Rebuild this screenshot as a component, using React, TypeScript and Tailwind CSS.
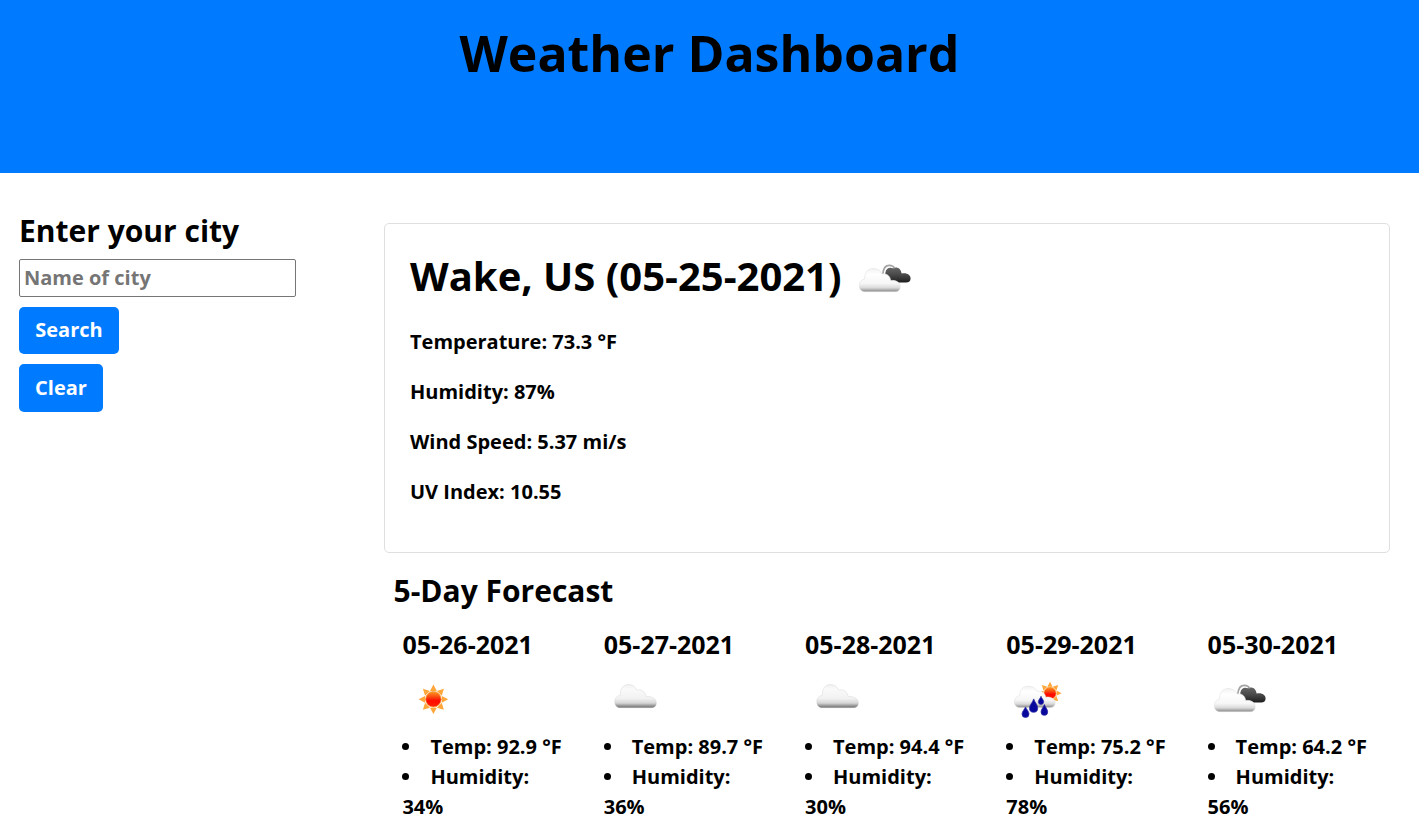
import React from "react";

type Kind = "sun" | "cloud" | "broken" | "rain";

function Defs() {
  return (
    <svg className="absolute h-0 w-0" aria-hidden="true">
      <defs>
        <linearGradient id="white-cloud" x1="0" y1="0" x2="0" y2="1">
          <stop offset="0" stopColor="#f0f0f0" />
          <stop offset="0.2" stopColor="#fafafa" />
          <stop offset="0.6" stopColor="#f2f2f2" />
          <stop offset="0.8" stopColor="#d6d6d6" />
          <stop offset="0.9" stopColor="#a0a0a0" />
          <stop offset="1" stopColor="#707070" />
        </linearGradient>
        <linearGradient id="bright-cloud" x1="0" y1="0" x2="0" y2="1">
          <stop offset="0" stopColor="#f2f2f2" />
          <stop offset="0.25" stopColor="#ffffff" />
          <stop offset="0.65" stopColor="#f6f6f6" />
          <stop offset="0.83" stopColor="#dadada" />
          <stop offset="1" stopColor="#888888" />
        </linearGradient>
        <linearGradient id="dark-cloud" x1="0" y1="0" x2="0" y2="1">
          <stop offset="0" stopColor="#666666" />
          <stop offset="0.5" stopColor="#484848" />
          <stop offset="0.8" stopColor="#303030" />
          <stop offset="1" stopColor="#1c1c1c" />
        </linearGradient>
        <linearGradient id="sun-disc" x1="0" y1="0" x2="0" y2="1">
          <stop offset="0" stopColor="#ff9a20" />
          <stop offset="0.35" stopColor="#f84a10" />
          <stop offset="0.6" stopColor="#ff0800" />
          <stop offset="1" stopColor="#ff2200" />
        </linearGradient>
      </defs>
    </svg>
  );
}

function Sun() {
  return (
    <g>
      {[0, 45, 90, 135, 180, 225, 270, 315].map((a) => (
        <path key={a} d="M-3.4 -8.4 L0 -14.8 L3.4 -8.4Z" fill="#ffa63a" transform={`rotate(${a})`} />
      ))}
      <circle r="7.8" fill="url(#sun-disc)" stroke="#f5a040" strokeWidth="0.8" />
    </g>
  );
}

/* Each icon is drawn in a 70x55 box. */
function WeatherIcon({ kind }: { kind: Kind }) {
  return (
    <svg width="70" height="55" viewBox="0 0 70 55" className="block shrink-0">
      {kind === "sun" && (
        <g transform="translate(33.4 29.3)">
          <Sun />
        </g>
      )}
      {kind === "cloud" && (
        <path
          transform="translate(-1.1 0.2)"
          d="M19 37.5 C16.5 37 14.8 34.5 14.8 31.5 C14.8 28 17 25.5 20.5 25 C20 18.5 23.5 14.3 28.5 14.3 C32.5 14.3 35.5 16.5 36.8 20 C41.5 18.6 45.5 21.5 46.3 26.5 C51.5 25.5 56.5 28.5 56.5 32.5 C56.5 35.5 55 37.5 51 37.5Z"
          fill="url(#white-cloud)"
          stroke="#bbbbbb"
          strokeOpacity="0.5"
          strokeWidth="0.5"
        />
      )}
      {kind === "broken" && (
        <g>
          <path
            d="M42 31 C36.5 30.5 34.8 27 35.4 22.5 C36 18.4 39.5 16.6 43 18.3 C46.5 16.2 51 18 51.6 23.6 C56.5 22.4 60.6 24.8 60.6 28.5 C60.6 31 59 32.4 56 32.4 L44 32.4Z"
            fill="url(#dark-cloud)"
          />
          <path d="M32.9 24 C33.3 18 35.5 15.3 39.3 15.3 C42 15.3 43.8 16.5 44.6 18.3" fill="none" stroke="#a4a4a4" strokeWidth="1.7" />
          <path
            d="M14 41.7 C11 41.2 9.3 38.7 9.3 35.7 C9.3 32 11.3 29.8 14.6 29 C14.4 22.5 18 18.6 23 18.6 C27.5 18.6 30.7 20.6 32 24 C36.5 23 40.2 26 40.8 30.5 C46 29.7 50.2 32.5 50.2 36.7 C50.2 39.7 48.3 41.7 45 41.7Z"
            fill="url(#bright-cloud)"
            stroke="#dddddd"
            strokeWidth="0.5"
          />
        </g>
      )}
      {kind === "rain" && (
        <g transform="translate(1 -0.4)">
          <g transform="translate(45 23.6) scale(.78)">
            <Sun />
          </g>
          <path
            d="M14 38 C11 37.5 9.3 35 9.3 32.3 C9.3 29 11.3 26.8 14.6 26 C14.4 20.5 18 16.6 23 16.6 C27.5 16.6 30.7 18.4 32 21.8 C36.5 20.8 40.2 23.3 40.8 27.6 C46 26.8 50.2 29.5 50.2 33.5 C50.2 36 48.3 38 45 38Z"
            fill="url(#bright-cloud)"
            stroke="#dddddd"
            strokeWidth="0.5"
          />
          <g fill="#08089c" stroke="#26269f" strokeWidth="0.7">
            <path d="M20.5 37.3 C19.5 40 17 41.6 17 44.4 A3.5 3.5 0 0 0 24 44.4 C24 41.6 21.5 40 20.5 37.3Z" />
            <path d="M28.7 29.3 C27.5 33 24.5 35.5 24.5 38.6 A4.1 4.1 0 0 0 32.7 38.6 C32.7 35.5 30 33 28.7 29.3Z" />
            <path d="M36 26.7 C35.4 28.8 33.4 30 33.4 32.2 A2.6 2.6 0 0 0 38.6 32.2 C38.6 30 36.6 28.8 36 26.7Z" />
            <path d="M39.4 35 C38.4 38 36 39.6 36 42.4 A3.3 3.3 0 0 0 42.7 42.4 C42.7 39.6 40.4 38 39.4 35Z" />
          </g>
        </g>
      )}
    </svg>
  );
}

const days: { date: string; kind: Kind; temp: string; humidity: string }[] = [
  { date: "05-26-2021", kind: "sun", temp: "92.9", humidity: "34" },
  { date: "05-27-2021", kind: "cloud", temp: "89.7", humidity: "36" },
  { date: "05-28-2021", kind: "cloud", temp: "94.4", humidity: "30" },
  { date: "05-29-2021", kind: "rain", temp: "75.2", humidity: "78" },
  { date: "05-30-2021", kind: "broken", temp: "64.2", humidity: "56" },
];

export default function App() {
  return (
    <div className="h-[831px] overflow-hidden bg-white font-['Open_Sans',sans-serif] text-[20px] leading-[30px] font-bold text-black">
      <Defs />
      <header className="h-[173px] bg-[#007bff] pt-[23px] text-center">
        <h1 className="text-[50px] leading-[60px]">Weather Dashboard</h1>
      </header>
      <div className="flex">
        <aside className="flex w-[384px] shrink-0 flex-col items-start pt-[40px] pl-[19px]">
          <h2 className="text-[30px] leading-[36px]">Enter your city</h2>
          <input
            placeholder="Name of city"
            className="mt-[10px] h-[38px] w-[277px] rounded-[2px] border border-[#767676] bg-white px-[4px] pb-[2px] placeholder:text-[#757575]"
          />
          <button className="mt-[10px] h-[47px] w-[100px] rounded-[5px] bg-[#007bff] pb-[2px] text-white">Search</button>
          <button className="mt-[10px] h-[48px] w-[84px] rounded-[5px] bg-[#007bff] text-white">Clear</button>
        </aside>
        <main className="w-[1006px] pt-[50px]">
          <section className="h-[330px] rounded-[5px] border border-[#dfdfdf] px-[25px] pt-[25px]">
            <div className="flex h-[55px]">
              <h2 className="w-[440px] pt-[3px] text-[40px] leading-[48px] whitespace-nowrap">Wake, US (05-25-2021)</h2>
              <div className="pt-px">
                <WeatherIcon kind="broken" />
              </div>
            </div>
            <div className="mt-[23px] flex flex-col gap-[20px]">
              <p>Temperature: 73.3 °F</p>
              <p>Humidity: 87%</p>
              <p>Wind Speed: 5.37 mi/s</p>
              <p>UV Index: 10.55</p>
            </div>
          </section>
          <h2 className="mt-[20px] pl-[9.5px] text-[30px] leading-[36px]">5-Day Forecast</h2>
          <div className="-ml-[1.6px] mt-[20px] flex">
            {days.map((d) => (
              <article key={d.date} className="w-[201.3px] shrink-0 px-[20px]">
                <h3 className="text-[25px] leading-[30px]">{d.date}</h3>
                <div className="-ml-[2.4px] mt-[11px] mb-[7px]">
                  <WeatherIcon kind={d.kind} />
                </div>
                <ul className="list-inside list-disc">
                  <li>Temp: {d.temp} °F</li>
                  <li>Humidity: {d.humidity}%</li>
                </ul>
              </article>
            ))}
          </div>
        </main>
      </div>
    </div>
  );
}
